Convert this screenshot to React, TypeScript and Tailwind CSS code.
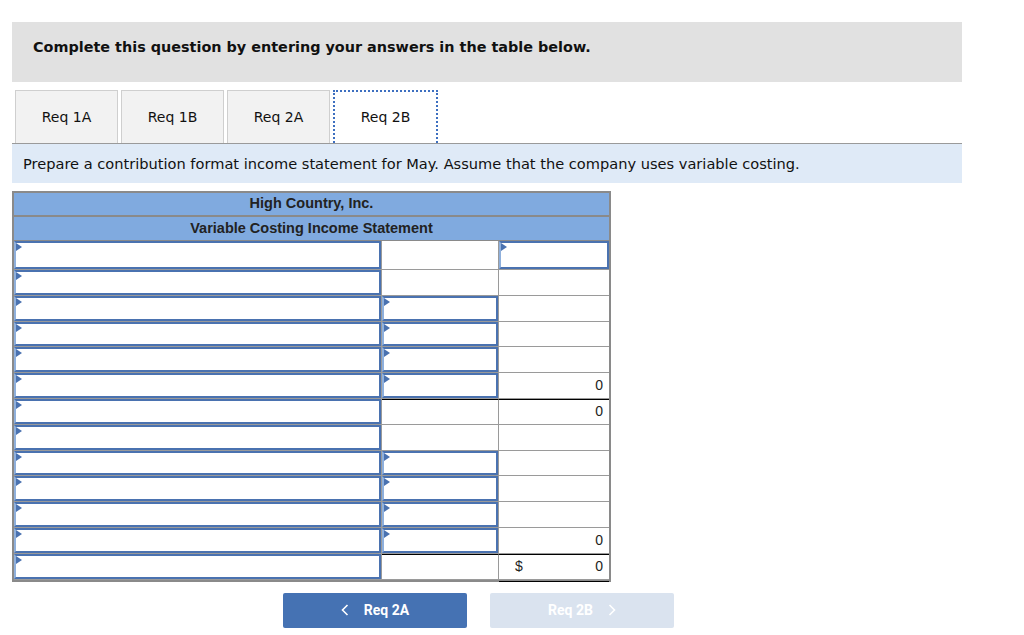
import {ReactNode} from "react";

type Cell = {input?: boolean; value?: string; dollar?: boolean; topRule?: boolean; double?: boolean};
type Row = [Cell, Cell, Cell];

const rows: Row[] = [
    [{input: true}, {}, {input: true}],
    [{input: true}, {}, {}],
    [{input: true}, {input: true}, {}],
    [{input: true}, {input: true}, {}],
    [{input: true}, {input: true}, {}],
    [{input: true}, {input: true}, {value: "0"}],
    [{input: true}, {topRule: true}, {value: "0", topRule: true}],
    [{input: true}, {}, {}],
    [{input: true}, {input: true}, {}],
    [{input: true}, {input: true}, {}],
    [{input: true}, {input: true}, {}],
    [{input: true}, {input: true}, {value: "0"}],
    [{input: true}, {topRule: true}, {value: "0", dollar: true, topRule: true, double: true}],
];

const widths = ["w-[368px]", "w-[117px]", "w-[110px]"];

function InputBox() {
    return (
        <div className="absolute inset-0 border-2 border-[#4a72b0] border-l-[#8fb0dc] bg-white">
            <span className="absolute left-0 top-0 w-0 h-0 border-y-[4px] border-y-transparent border-l-[6px] border-l-[#4a72b0]"></span>
        </div>
    );
}

function TableCell({cell, width, last, height}: {cell: Cell; width: string; last: boolean; height: string}) {
    return (
        <div className={`relative ${width} ${height} shrink-0 border-b border-[#9a9a9a] ${last ? "" : "border-r"} ${cell.topRule ? "border-t border-t-black" : ""}`}>
            {cell.input && <InputBox />}
            {cell.value && (
                <div className="absolute inset-0 flex items-center justify-between px-[6px] text-[14px] text-[#222]">
                    <span className="pl-[10px]">{cell.dollar ? "$" : ""}</span>
                    <span>{cell.value}</span>
                </div>
            )}
            {cell.double && <div className="absolute left-0 right-0 -bottom-[3px] border-b border-black"></div>}
        </div>
    );
}

function Tab({label, active}: {label: string; active?: boolean}): ReactNode {
    return (
        <div className={`h-[53px] flex items-center justify-center text-[14px] text-[#111] ${active ? "w-[105px] bg-white border-2 border-dotted border-[#3d6fc0] border-b-0" : "w-[103px] bg-[#f2f2f2] border border-[#cfcfcf] border-b-0"}`}>
            {label}
        </div>
    );
}

export default function App() {
    return (
        <div className="w-[1024px] h-[635px] bg-white pt-[22px] px-[12px]" style={{fontFamily: '"DejaVu Sans", Verdana, sans-serif'}}>
            <div className="w-[950px] h-[60px] bg-[#e1e1e1] pl-[21px] pt-[15px]">
                <p className="text-[14.4px] leading-[20px] font-bold text-[#111]">Complete this question by entering your answers in the table below.</p>
            </div>

            <div className="w-[950px] mt-[8px] flex gap-[3px] pl-[3px] border-b border-[#9a9a9a]">
                <Tab label="Req 1A" />
                <Tab label="Req 1B" />
                <Tab label="Req 2A" />
                <Tab label="Req 2B" active />
            </div>

            <div className="w-[950px] h-[39px] bg-[#dfeaf7] flex items-center pl-[11px]">
                <p className="text-[14.6px] text-[#111]">Prepare a contribution format income statement for May. Assume that the company uses variable costing.</p>
            </div>

            <div className="mt-[8px] w-[599px] border-2 border-[#8a8a8a]" style={{fontFamily: '"Liberation Sans", Arial, sans-serif'}}>
                <div className="h-[24px] bg-[#80aadf] flex items-center justify-center text-[14.5px] font-bold text-[#222] border-b-2 border-[#8a8a8a]">High Country, Inc.</div>
                <div className="h-[24px] bg-[#80aadf] flex items-center justify-center text-[14.5px] font-bold text-[#222] border-b border-[#8a8a8a]">Variable Costing Income Statement</div>
                {rows.map((row, i) => (
                    <div key={i} className="flex">
                        {row.map((cell, j) => (
                            <TableCell key={j} cell={cell} width={widths[j]} last={j === 2} height={i === 0 ? "h-[29px]" : "h-[25.8px]"} />
                        ))}
                    </div>
                ))}
            </div>

            <div className="flex gap-[23px] mt-[11px] ml-[271px]" style={{fontFamily: 'Roboto, "Noto Sans", sans-serif'}}>
                <button className="w-[184px] h-[35px] rounded-[2px] bg-[#4572b3] text-white text-[14px] font-bold flex items-center justify-center gap-[15px]">
                    <svg width="8" height="12" viewBox="0 0 8 12" fill="none" stroke="white" strokeWidth="1.6"><path d="M6.5 1 L1.5 6 L6.5 11" /></svg>
                    <span>Req 2A</span>
                </button>
                <button disabled className="w-[184px] h-[35px] rounded-[2px] bg-[#dae3ef] text-white text-[14px] font-bold flex items-center justify-center gap-[15px]">
                    <span>Req 2B</span>
                    <svg width="8" height="12" viewBox="0 0 8 12" fill="none" stroke="white" strokeWidth="1.6"><path d="M1.5 1 L6.5 6 L1.5 11" /></svg>
                </button>
            </div>
        </div>
    );
}
